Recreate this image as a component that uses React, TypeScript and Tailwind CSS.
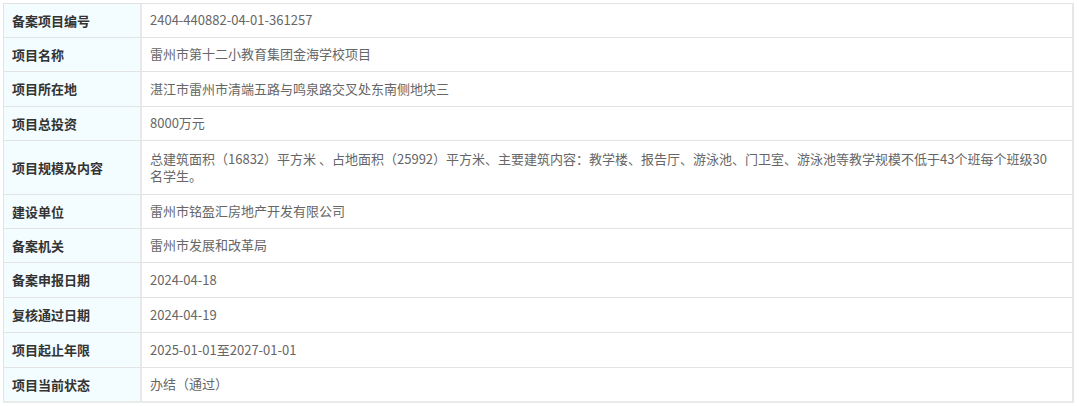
import React from "react";

const rows: { label: string; value: string; h: string }[] = [
  { label: "备案项目编号", value: "2404-440882-04-01-361257", h: "h-[34px]" },
  { label: "项目名称", value: "雷州市第十二小教育集团金海学校项目", h: "h-[34px]" },
  { label: "项目所在地", value: "湛江市雷州市清端五路与鸣泉路交叉处东南侧地块三", h: "h-[35px]" },
  { label: "项目总投资", value: "8000万元", h: "h-[34px]" },
  {
    label: "项目规模及内容",
    value:
      "总建筑面积（16832）平方米 、占地面积（25992）平方米、主要建筑内容：教学楼、报告厅、游泳池、门卫室、游泳池等教学规模不低于43个班每个班级30名学生。",
    h: "h-[54px]",
  },
  { label: "建设单位", value: "雷州市铭盈汇房地产开发有限公司", h: "h-[34px]" },
  { label: "备案机关", value: "雷州市发展和改革局", h: "h-[34px]" },
  { label: "备案申报日期", value: "2024-04-18", h: "h-[35px]" },
  { label: "复核通过日期", value: "2024-04-19", h: "h-[35px]" },
  { label: "项目起止年限", value: "2025-01-01至2027-01-01", h: "h-[35px]" },
  { label: "项目当前状态", value: "办结（通过）", h: "h-[33px]" },
];

export default function App() {
  return (
    <div
      className="w-[1080px] h-[406px] bg-white pt-[3px] pl-[3px]"
      style={{ fontFamily: '"Noto Sans CJK SC", "Noto Sans", sans-serif' }}
    >
      <div className="w-[1071px] border-t border-l border-[#e3e3e3] border-r-2 border-r-[#e6e6e6] border-b-2 border-b-[#ebebeb]">
        {rows.map((r, i) => (
          <div
            key={i}
            className={`flex ${r.h} ${i < rows.length - 1 ? "border-b border-[#e3e3e3]" : ""}`}
          >
            <div className="w-[138px] shrink-0 bg-[#f3fcfe] border-r-2 border-[#e8e8e8] flex items-center pl-[8px] text-[13px] font-bold text-[#333333]">
              {r.label}
            </div>
            <div className="flex-1 flex items-center pl-[8px] pr-[24px] pb-[2px] text-[13px] leading-[17px] text-[#666666]">
              {r.value}
            </div>
          </div>
        ))}
      </div>
    </div>
  );
}
